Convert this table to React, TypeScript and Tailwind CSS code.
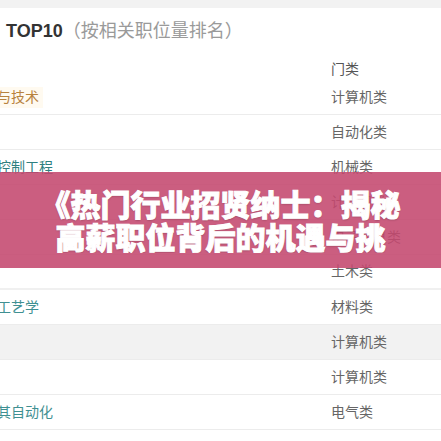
const rows = [
  { name: "计算机科学与技术", type: "计算机类", tone: "text-[#b8823e] bg-[#fffaf0]" },
  { name: "", type: "自动化类", tone: "" },
  { name: "机械电子与控制工程", type: "机械类", tone: "text-[#2f7f80]" },
  { name: "", type: "计算机类", tone: "" },
  { name: "", type: "电子信息类", tone: "" },
  { name: "", type: "土木类", tone: "", thick: true },
  { name: "金属材料加工艺学", type: "材料类", tone: "text-[#3f9092]" },
  { name: "", type: "计算机类", tone: "", shaded: true },
  { name: "", type: "计算机类", tone: "" },
  { name: "电气工程及其自动化", type: "电气类", tone: "text-[#3f9092]" },
];

export default function App() {
  return (
    <div
      className="relative h-[441px] w-[441px] overflow-hidden bg-white"
      style={{ fontFamily: '"Liberation Sans", "Noto Sans CJK SC", sans-serif' }}
    >
      <div className="h-[8px] bg-[#f2f2f2]" />

      <div className="flex h-[47px] items-center whitespace-nowrap pl-[6px] text-[18px]">
        <span className="font-bold text-[#333]">TOP10</span>
        <span className="text-[#9a9a9a]">（按相关职位量排名）</span>
      </div>

      <div className="flex h-[25px] items-end">
        <div className="w-[331px]" />
        <span className="text-[14px] leading-[22px] text-[#555]">门类</span>
      </div>

      <div>
        {rows.map((row, i) => (
          <div
            key={i}
            className={`flex h-[35px] items-center text-[14px] ${row.thick ? "border-b-2 border-[#f0f0f0]" : "border-b border-[#ececec]"} ${row.shaded ? "bg-[#f2f2f2]" : ""}`}
          >
            <div className="w-[331px] overflow-hidden whitespace-nowrap">
              {row.name && (
                <span className={`-ml-[73px] inline-block pr-[4px] ${row.tone}`}>{row.name}</span>
              )}
            </div>
            <span className="text-[#666]">{row.type}</span>
          </div>
        ))}
      </div>

      <div className="absolute left-0 top-[172px] flex h-[96px] w-full items-center justify-center bg-[rgba(196,72,110,0.88)]">
        <p
          className="h-[66px] w-[360px] overflow-hidden text-center text-[30px] font-black leading-[33px] text-white [-webkit-text-stroke:1px_white] [text-shadow:0_1px_2px_rgba(0,0,0,0.25)]"
          style={{ fontFamily: '"Noto Sans CJK SC", sans-serif' }}
        >
          《热门行业招贤纳士：揭秘高薪职位背后的机遇与挑战》
        </p>
      </div>
    </div>
  );
}
